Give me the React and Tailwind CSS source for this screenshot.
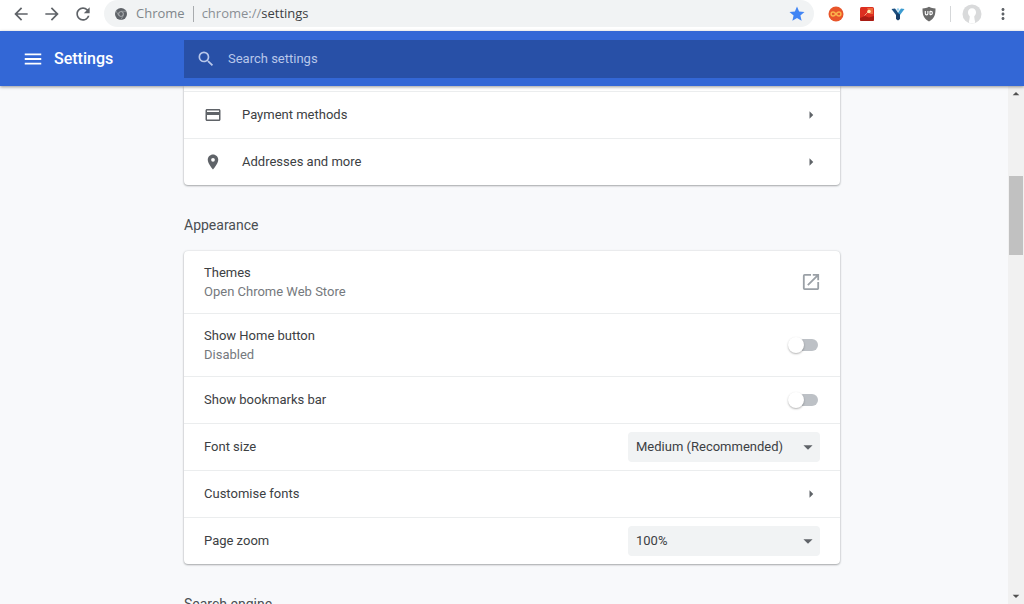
import React, { useState } from 'react';
import {
  MdArrowBack,
  MdArrowForward,
  MdArrowDropDown,
  MdArrowDropUp,
  MdArrowRight,
  MdCreditCard,
  MdMenu,
  MdMoreVert,
  MdOpenInNew,
  MdPlace,
  MdRefresh,
  MdSearch,
  MdStar,
} from 'react-icons/md';

function ChromeIcon() {
  return (
    <svg viewBox="0 0 24 24" className="size-3 shrink-0">
      <circle cx="12" cy="12" r="12" fill="#5f6368" />
      <path d="M12 6.5h11M7.2 14.8 1.8 5.6M16.8 14.8 11.4 24" stroke="#a4a7aa" strokeWidth="1.4" />
      <circle cx="12" cy="12" r="5.5" fill="#b4b7ba" />
      <circle cx="12" cy="12" r="3.8" fill="#5f6368" />
    </svg>
  );
}

function InfinityExtension() {
  return (
    <svg viewBox="0 0 16 16" className="size-4">
      <circle cx="8" cy="8" r="7.5" fill="#e8552a" />
      <path
        d="M8 8C6.800 6.500 6 6 5.100 6a2 2 0 0 0 0 4C6 10 6.800 9.500 8 8s2-2 2.900-2a2 2 0 0 1 0 4C10 10 9.200 9.500 8 8Z"
        fill="none"
        stroke="#fbb34c"
        strokeWidth="1.5"
      />
    </svg>
  );
}

function PictureExtension() {
  return (
    <svg viewBox="0 0 16 16" className="size-4">
      <rect x="1" y="1" width="14" height="14" rx="1.5" fill="#dc2f20" />
      <path d="M1 12 6 10l4 1.500 5-1.500v3.500a1.500 1.500 0 0 1-1.500 1.500h-11A1.500 1.500 0 0 1 1 13.500Z" fill="#a81c14" />
      <path d="M8 2h6v6H11Z" fill="#ee6a3c" />
      <path d="m9 6-3.500 3.500" stroke="#f0a080" strokeWidth="1" />
      <circle cx="10" cy="5.500" r="1.800" fill="#ffe9b0" />
    </svg>
  );
}

function ForkExtension() {
  return (
    <svg viewBox="0 0 16 16" className="size-4">
      <path d="M1.500 3 5 2.500 8 6.500v3.500L6 9Z" fill="#1b4f80" />
      <path d="M14.500 3 11 2.500 8 6.500V10l2-1Z" fill="#3b9bd0" />
      <path d="M6 8.500 8 7l2 1.500V13l-2 1.500L6 13Z" fill="#173f6b" />
      <circle cx="8" cy="3.500" r="1.300" fill="#9ad2f0" />
    </svg>
  );
}

function ShieldExtension() {
  return (
    <svg viewBox="0 0 16 16" className="size-4">
      <path d="M8 .8c2 1.200 4 1.600 6.500 1.700 0 6-.8 9.800-6.500 12.900C2.300 12.300 1.500 8.500 1.500 2.500 4 2.400 6 2 8 .8Z" fill="#6b6b6b" />
      <path d="M4.300 5v2.600a1.300 1.300 0 0 0 2.600 0V5M9 5v4M9 5.400h.8a1.600 1.600 0 0 1 0 3.200H9" fill="none" stroke="#fff" strokeWidth="1.100" />
    </svg>
  );
}

function Avatar() {
  return (
    <svg viewBox="0 0 20 20" className="size-5">
      <circle cx="10" cy="10" r="9.500" fill="#d9dadb" />
      <path d="M10 4.200c-2.500 0-4 1.800-4 4 0 1.700.7 3 1.700 3.900v1.500c-.1 1.500-.5 3.200-1 4.800 2 1.200 4.600 1.200 6.600 0-.5-1.600-.9-3.300-1-4.800v-1.500c1-.9 1.700-2.200 1.700-3.900 0-2.200-1.500-4-4-4Z" fill="#fff" />
    </svg>
  );
}

function BrowserBar() {
  return (
    <div className="flex h-[31px] shrink-0 items-start bg-white text-[#5f6368]">
      <nav className="flex h-[27px] items-center gap-[11px] px-[11px]">
        <button type="button" aria-label="Back"><MdArrowBack className="size-5" /></button>
        <button type="button" aria-label="Forward"><MdArrowForward className="size-5" /></button>
        <button type="button" aria-label="Reload"><MdRefresh className="size-5" /></button>
      </nav>
      <div className="flex h-[27px] min-w-0 flex-1 items-center rounded-full bg-[#f1f3f4] pl-[11px] pr-2 font-['Open_Sans',sans-serif] text-[13px]">
        <ChromeIcon />
        <span className="ml-[9px] text-[#80868b]">Chrome</span>
        <span className="mx-2 h-4 w-px bg-[#a8abae]" />
        <span className="flex-1 truncate text-[#8a8f94]">
          chrome://<span className="text-[#3c4043]">settings</span>
        </span>
        <button type="button" aria-label="Bookmark"><MdStar className="size-[18px] text-[#4285f4]" /></button>
      </div>
      <div className="flex h-[27px] items-center px-3">
        <div className="flex items-center gap-[15px] pl-0.5 pr-[13px]">
          <button type="button" aria-label="Infinity"><InfinityExtension /></button>
          <button type="button" aria-label="Pictures"><PictureExtension /></button>
          <button type="button" aria-label="Fork"><ForkExtension /></button>
          <button type="button" aria-label="Shield"><ShieldExtension /></button>
        </div>
        <span className="mr-[11px] h-4 w-px bg-[#d5d7d9]" />
        <button type="button" aria-label="Profile"><Avatar /></button>
        <button type="button" aria-label="More" className="ml-3"><MdMoreVert className="size-[18px]" /></button>
      </div>
    </div>
  );
}

function Header() {
  return (
    <header className="relative z-10 grid h-[55px] shrink-0 grid-cols-[1fr_minmax(0,656px)_1fr] items-center bg-[#3367d6] shadow-[0_1px_3px_rgba(0,0,0,0.4)]">
      <div className="flex items-center gap-2.5 pl-[22px] text-white">
        <button type="button" aria-label="Main menu"><MdMenu className="size-[22px]" /></button>
        <h1 className="text-base font-medium">Settings</h1>
      </div>
      <div className="flex h-[38px] items-center gap-3 bg-[#2850a7] pl-3 text-[#b8c7ea]">
        <MdSearch className="size-5 shrink-0" />
        <input
          type="search"
          aria-label="Search settings"
          placeholder="Search settings"
          className="h-full flex-1 bg-transparent text-[13px] text-white outline-none placeholder:text-[#b8c7ea]"
        />
      </div>
    </header>
  );
}

function Row({ id, title, sub, icon, children }) {
  return (
    <div className={`flex items-center border-t border-[#ebedee] px-5 text-[13px] leading-[19px] first:border-t-0 ${sub ? 'min-h-[63px] first:min-h-[62px]' : 'min-h-[47px]'}`}>
      {icon && <span className="mr-5 text-[#5f6368]">{icon}</span>}
      <label htmlFor={id} className="flex-1 pb-px text-[#3c4043]">
        {title}
        {sub && <span className="block text-[#75797d]">{sub}</span>}
      </label>
      {children}
    </div>
  );
}

function RowArrow({ id }) {
  return (
    <button id={id} type="button" className="text-[#5f6368]">
      <MdArrowRight className="size-[18px]" />
    </button>
  );
}

function Toggle({ id }) {
  const [on, setOn] = useState(false);

  return (
    <input
      id={id}
      type="checkbox"
      role="switch"
      checked={on}
      onChange={() => setOn(!on)}
      className="relative mr-0.5 h-3 w-7 appearance-none rounded-full bg-[#bdc1c6] before:absolute before:-top-0.5 before:-left-0.5 before:size-4 before:rounded-full before:bg-white before:shadow-[0_1px_2px_rgba(0,0,0,0.3)] checked:bg-[#8ab4f8] checked:before:left-3.5 checked:before:bg-[#1a73e8]"
    />
  );
}

function Select({ id, options }) {
  return (
    <div className="relative w-48">
      <select id={id} className="h-[30px] w-full appearance-none rounded-sm bg-[#f1f3f4] pr-6 pb-0.5 pl-2 text-[13px] text-[#3c4043]">
        {options.map((option) => <option key={option}>{option}</option>)}
      </select>
      <MdArrowDropDown className="pointer-events-none absolute top-1 right-px size-[22px] text-[#5f6368]" />
    </div>
  );
}

function SectionTitle({ children }) {
  return <h2 className="pt-[29px] pb-[15px] text-sm leading-[22px] text-[#4a4e52]">{children}</h2>;
}

function Scrollbar() {
  return (
    <div className="flex w-4 shrink-0 flex-col items-center bg-[#f1f1f1] text-[#505050]">
      <MdArrowDropUp className="size-4 shrink-0" />
      <div className="mt-[74px] h-[79px] w-3.5 bg-[#c1c1c1]" />
      <MdArrowDropDown className="mt-auto size-4 shrink-0" />
    </div>
  );
}

export default function App() {
  return (
    <div className="flex h-screen flex-col overflow-hidden bg-[#f8f9fb] font-[Roboto,sans-serif]">
      <BrowserBar />
      <Header />
      <div className="flex min-h-0 flex-1">
        {/* pl-4 balances the scrollbar so the column lines up with the search box */}
        <main className="flex min-w-0 flex-1 justify-center overflow-hidden pl-4">
          <div className="w-full max-w-[656px]">
            <section className="rounded-b bg-white pt-[5px] shadow-[0_1px_2px_rgba(60,64,67,0.4),0_0_2px_rgba(60,64,67,0.2)]">
              {/* tail of the row that is scrolled under the header */}
              <div />
              <Row id="payments" title="Payment methods" icon={<MdCreditCard className="size-[18px]" />}>
                <RowArrow id="payments" />
              </Row>
              <Row id="addresses" title="Addresses and more" icon={<MdPlace className="size-[18px]" />}>
                <RowArrow id="addresses" />
              </Row>
            </section>

            <SectionTitle>Appearance</SectionTitle>
            <section className="rounded bg-white shadow-[0_1px_2px_rgba(60,64,67,0.4),0_0_2px_rgba(60,64,67,0.2)]">
              <Row id="themes" title="Themes" sub="Open Chrome Web Store">
                <button id="themes" type="button" className="text-[#9aa0a6]">
                  <MdOpenInNew viewBox="2 2 20 20" className="size-[18px]" />
                </button>
              </Row>
              <Row id="home" title="Show Home button" sub="Disabled"><Toggle id="home" /></Row>
              <Row id="bookmarks" title="Show bookmarks bar"><Toggle id="bookmarks" /></Row>
              <Row id="font-size" title="Font size">
                <Select id="font-size" options={['Medium (Recommended)', 'Small', 'Large']} />
              </Row>
              <Row id="fonts" title="Customise fonts"><RowArrow id="fonts" /></Row>
              <Row id="zoom" title="Page zoom">
                <Select id="zoom" options={['100%', '110%', '125%']} />
              </Row>
            </section>

            <SectionTitle>Search engine</SectionTitle>
          </div>
        </main>
        <Scrollbar />
      </div>
    </div>
  );
}
